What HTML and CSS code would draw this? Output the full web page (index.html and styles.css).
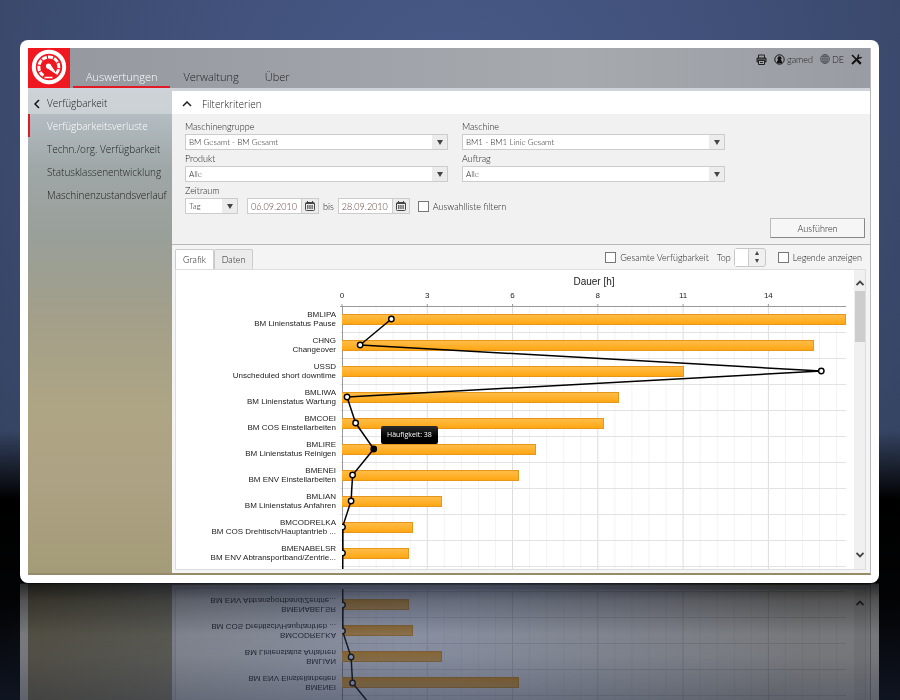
FILE: index.html
```html
<!DOCTYPE html>
<html lang="de">

<head>
  <meta charset="UTF-8">
  <title>Verfügbarkeitsverluste</title>
  <link rel="stylesheet" href="styles.css">
</head>

<body>
  <div class="window">
    <div class="app">
      <!-- Kopfzeile -->
      <header class="topbar">
        <a href="#" class="logo" aria-label="Startseite">
          <svg width="42" height="40" viewBox="0 0 42 40">
            <circle cx="21" cy="19" r="15.200" fill="none" stroke="#fff" stroke-width="4" />
            <path d="M15.500 27.500A10 10 0 1 1 28 26" fill="none" stroke="#fff" stroke-width="3" stroke-dasharray="5 1.200" />
            <path d="M16.500 29.500h8" fill="none" stroke="#fff" stroke-width="1.500" />
            <circle cx="20.500" cy="18" r="2.600" fill="#fff" />
            <path d="M22.500 16.500L29.500 27L18.800 20Z" fill="#fff" />
          </svg>
        </a>
        <nav class="main-nav">
          <a href="#" class="active">Auswertungen</a>
          <a href="#">Verwaltung</a>
          <a href="#">Über</a>
        </nav>
        <div class="tools">
          <button type="button" aria-label="Drucken">
            <svg width="11" height="11" viewBox="0 0 11 11" fill="none" stroke="#222">
              <path d="M2.500 4V1h6v3" />
              <path d="M1 4h9v4H1z" fill="#555" />
              <path d="M2.500 6.500h6v4h-6z" fill="#a5a8ad" />
              <path d="M4 8.500h3" />
            </svg>
          </button>
          <a href="#" class="user">
            <svg width="11" height="11" viewBox="0 0 11 11">
              <circle cx="5.500" cy="5.500" r="4.700" fill="none" stroke="#111" />
              <circle cx="5.500" cy="4.200" r="2" fill="#111" />
              <path d="M3 9.200V7.500Q3.500 5.500 5.500 5.500T8 7.500V9.200Z" fill="#111" />
            </svg>
            <span>gamed</span>
          </a>
          <a href="#" class="lang">
            <svg width="10" height="10" viewBox="0 0 10 10" fill="none" stroke="#4c4f55" stroke-width="0.800">
              <circle cx="5" cy="5" r="4.500" />
              <ellipse cx="5" cy="5" rx="2.200" ry="4.500" />
              <path d="M5 .500v9M.500 5h9M1.200 2.700h7.600M1.200 7.300h7.600" />
            </svg>
            <span>DE</span>
          </a>
          <button type="button" aria-label="Einstellungen">
            <svg width="11" height="11" viewBox="0 0 11 11" fill="none" stroke="#111">
              <path d="M1 1l4 4" stroke-width="1.600" />
              <path d="M6 6l3.800 3.800" stroke-width="2.400" />
              <path d="M1 10l6.500-6.500" stroke-width="2" />
              <path d="M8 .500Q6.500 2 7.500 3.500T10.500 3" stroke-width="1.400" />
            </svg>
          </button>
        </div>
      </header>

      <div class="body">
        <!-- Seitenmenü -->
        <aside class="sidebar">
          <a href="#" class="back">
            <svg width="6" height="10" viewBox="0 0 6 10" fill="none" stroke="#111" stroke-width="1.500">
              <path d="M5 1L1 5l4 4" />
            </svg>
            <span>Verfügbarkeit</span>
          </a>
          <a href="#" class="item active">Verfügbarkeitsverluste</a>
          <a href="#" class="item">Techn./org. Verfügbarkeit</a>
          <a href="#" class="item">Statusklassenentwicklung</a>
          <a href="#" class="item">Maschinenzustandsverlauf</a>
        </aside>

        <main class="content">
          <button type="button" class="filter-head">
            <svg width="10" height="6" viewBox="0 0 10 6" fill="none" stroke="#222" stroke-width="1.500">
              <path d="M1 5l4-4 4 4" />
            </svg>
            <span>Filterkriterien</span>
          </button>

          <form class="filter">
            <div class="fields">
              <div class="field">
                <label for="gruppe">Maschinengruppe</label>
                <div class="select"><select id="gruppe"><option>BM Gesamt - BM Gesamt</option></select></div>
              </div>
              <div class="field">
                <label for="maschine">Maschine</label>
                <div class="select"><select id="maschine"><option>BM1 - BM1 Linie Gesamt</option></select></div>
              </div>
              <div class="field">
                <label for="produkt">Produkt</label>
                <div class="select"><select id="produkt"><option>Alle</option></select></div>
              </div>
              <div class="field">
                <label for="auftrag">Auftrag</label>
                <div class="select"><select id="auftrag"><option>Alle</option></select></div>
              </div>
            </div>
            <div class="field">
              <label for="zeitraum">Zeitraum</label>
              <div class="period">
                <div class="select unit"><select id="zeitraum"><option>Tag</option></select></div>
                <div class="date">
                  <input type="text" value="06.09.2010" aria-label="von">
                  <button type="button" aria-label="Kalender öffnen">
                    <svg width="10" height="10" viewBox="0 0 10 10" fill="none" stroke="#444">
                      <rect x="0.500" y="1.500" width="9" height="8" rx="1" />
                      <path d="M.500 2.500h9M2.500 0v2M7.500 0v2" />
                      <path d="M2 5h6M2 7h6" stroke-dasharray="1.500 .700" stroke-width="1.300" />
                    </svg>
                  </button>
                </div>
                <label for="bis">bis</label>
                <div class="date">
                  <input type="text" id="bis" value="28.09.2010">
                  <button type="button" aria-label="Kalender öffnen">
                    <svg width="10" height="10" viewBox="0 0 10 10" fill="none" stroke="#444">
                      <rect x="0.500" y="1.500" width="9" height="8" rx="1" />
                      <path d="M.500 2.500h9M2.500 0v2M7.500 0v2" />
                      <path d="M2 5h6M2 7h6" stroke-dasharray="1.500 .700" stroke-width="1.300" />
                    </svg>
                  </button>
                </div>
                <label class="check"><input type="checkbox">Auswahlliste filtern</label>
              </div>
            </div>
            <button type="submit" class="run">Ausführen</button>
          </form>

          <section class="results">
            <div class="results-bar">
              <div class="tabs">
                <button type="button" class="tab active">Grafik</button>
                <button type="button" class="tab">Daten</button>
              </div>
              <div class="options">
                <label class="check"><input type="checkbox">Gesamte Verfügbarkeit</label>
                <label for="top">Top</label>
                <div class="spinner">
                  <input type="text" id="top">
                  <div class="steps">
                    <button type="button" aria-label="mehr"></button>
                    <button type="button" class="down" aria-label="weniger"></button>
                  </div>
                </div>
                <label class="check"><input type="checkbox">Legende anzeigen</label>
              </div>
            </div>

            <!-- Diagramm -->
            <div class="panel">
              <div class="chart">
                <div class="axis">
                  <div class="axis-title">Dauer [h]</div>
                  <div class="ticks" id="ticks"></div>
                </div>
                <div class="labels" id="labels"></div>
                <div class="plot" id="plot">
                  <svg class="grid" id="grid"></svg>
                  <div id="bars"></div>
                  <svg class="line" id="line"></svg>
                  <div class="tooltip">Häufigkeit: 38</div>
                </div>
              </div>
              <div class="scrollbar">
                <svg width="8" height="6" viewBox="0 0 8 6" fill="none" stroke="#444" stroke-width="1.800">
                  <path d="M.500 5L4 1.500 7.500 5" />
                </svg>
                <div class="thumb"></div>
                <svg width="8" height="6" viewBox="0 0 8 6" fill="none" stroke="#444" stroke-width="1.800">
                  <path d="M.500 1L4 4.500 7.500 1" />
                </svg>
              </div>
            </div>
          </section>
        </main>
      </div>
    </div>
  </div>

  <script src="chart.js"></script>
</body>

</html>
```

FILE: styles.css
```css
* {
  box-sizing: border-box;
}

html {
  height: 100%;
}

body {
  margin: 0;
  min-height: 100%;
  padding: 40px 21px 0 20px;
  overflow: hidden;
  font-family: Lato, "Open Sans", sans-serif;
  font-weight: 300;
  font-size: 9px;
  color: #222;
  background:
    radial-gradient(ellipse 400px 150px at 45% 640px, rgba(62, 82, 132, 0.6), transparent),
    linear-gradient(to bottom, transparent 430px, #000 500px, rgba(0, 0, 0, 0.95) 600px, rgba(6, 9, 17, 0.8) 700px),
    radial-gradient(ellipse 620px 600px at 50% 100px, #485a88, #405079 45%, #34425f 100%);
}

a {
  color: inherit;
  text-decoration: none;
}

button,
input,
select {
  font: inherit;
  color: inherit;
  margin: 0;
  padding: 0;
  border: none;
  background: none;
}

svg {
  display: block;
}

/* Fenster mit Spiegelung */
.window {
  background: #fff;
  padding: 8px;
  border-radius: 8px;
  -webkit-box-reflect: below -8px linear-gradient(to top, transparent 8px, rgba(0, 0, 0, 0.16) 9px, rgba(0, 0, 0, 0.32) 26px, rgba(0, 0, 0, 0.45) 60px, rgba(0, 0, 0, 0.44) 80px, rgba(0, 0, 0, 0.32) 130px);
}

.app {
  border-right: 1px solid #b9b9bd;
  border-bottom: 2px solid #958b68;
  background: linear-gradient(to bottom, #b6bfc5 0, #b6bfc5 60px, #9fa7a7 120px, #999f99 190px, #a39f89 270px, #aea584 360px, #ada384 430px, #a49b78 100%);
}

/* Kopfzeile */
.topbar {
  display: flex;
  height: 43px;
  border-bottom: 3px solid #cfd3dc;
  background: linear-gradient(to right, #94989e, #9da1a7 30%, #a6a9ae 65%, #999ca2);
}

.logo {
  width: 42px;
  background: #f01820;
}

.main-nav {
  display: flex;
  flex: 1;
  margin-left: 3px;
  font-family: "Open Sans", "Noto Sans", sans-serif;
  font-size: 11px;
}

.main-nav a {
  padding: 20px 13px 0;
  line-height: 18px;
  border-bottom: 2px solid transparent;
}

.main-nav .active {
  color: #fff;
  border-color: #e01b26;
}

.tools {
  display: flex;
  align-items: center;
  gap: 7px;
  height: 22px;
  padding-right: 8px;
}

.tools a {
  display: flex;
  align-items: center;
  gap: 2px;
}

/* Seitenmenü */
.body {
  display: flex;
}

.sidebar {
  width: 144px;
  font-family: "Open Sans", "Noto Sans", sans-serif;
  font-size: 10px;
  line-height: 21px;
}

.sidebar a {
  display: flex;
  align-items: center;
  padding-top: 2px;
}

.sidebar .back {
  gap: 7px;
  padding-left: 6px;
  background: rgba(255, 255, 255, 0.3);
}

.sidebar .item {
  padding-left: 17px;
  border-left: 2px solid transparent;
}

.sidebar .active {
  color: #fff;
  border-color: #e01b26;
}

/* Filter */
.content {
  flex: 1;
  min-width: 0;
  background: #f1f1f1;
}

.filter-head {
  display: flex;
  align-items: center;
  gap: 10px;
  width: 100%;
  height: 23px;
  padding: 2px 10px 0;
  font-family: "Open Sans", "Noto Sans", sans-serif;
  font-size: 10px;
  background: #fff;
}

.filter {
  display: flex;
  flex-direction: column;
  gap: 2px;
  height: 131px;
  padding: 6px 5px 6px 13px;
  border-bottom: 1px solid #b8b8b8;
}

.fields {
  display: grid;
  grid-template-columns: repeat(2, minmax(0, 263px));
  gap: 2px 14px;
}

.field > label {
  display: block;
  line-height: 14px;
}

.select {
  position: relative;
  height: 16px;
  border: 1px solid #ccc;
  background: linear-gradient(to left, #ececec 15px, #fff 15px);
}

.select::after {
  content: "";
  position: absolute;
  top: 5px;
  right: 4px;
  border: 3px solid transparent;
  border-top: 5px solid #444;
  border-bottom: none;
  pointer-events: none;
}

.select select {
  display: block;
  appearance: none;
  width: 100%;
  height: 14px;
  padding-left: 3px;
  font-size: 8px;
}

.period {
  display: flex;
  align-items: center;
}

.unit {
  width: 53px;
  margin-right: 9px;
}

.date {
  display: flex;
  width: 72px;
  height: 16px;
  border: 1px solid #ccc;
  background: #fff;
}

.date input {
  flex: 1;
  min-width: 0;
  padding-left: 3px;
  color: #5c3a34;
}

.date button {
  width: 17px;
  padding-left: 3px;
  border-left: 1px solid #ccc;
  background: #ececec;
}

.period > label {
  padding: 0 4px;
}

.check {
  display: flex;
  align-items: center;
  gap: 4px;
}

.check input {
  appearance: none;
  width: 11px;
  height: 11px;
  border: 1px solid #777;
  background: #fff;
}

.period > .check {
  margin-left: 4px;
}

.run {
  width: 95px;
  height: 20px;
  margin: auto 0 0 auto;
  border: 1px solid #bbb;
  border-right-color: #888;
  border-bottom-color: #888;
  background: #f6f6f6;
}

/* Ergebnis */
.results {
  padding: 0 4px 3px 3px;
  background: #f5f4f5;
}

.results-bar {
  display: flex;
  justify-content: space-between;
  align-items: flex-end;
  height: 24px;
}

.tabs {
  display: flex;
}

.tab {
  width: 39px;
  height: 20px;
  border: 1px solid #ccc;
  border-bottom: none;
  border-radius: 2px 2px 0 0;
  background: #ececec;
}

.tab.active {
  background: #fff;
}

.options {
  display: flex;
  align-items: center;
  height: 24px;
  gap: 8px;
  padding-right: 4px;
}

.spinner {
  display: flex;
  width: 32px;
  height: 19px;
  border: 1px solid #c8c8c8;
  border-radius: 3px;
  background: #f0f0f0;
}

.options .spinner {
  margin: 0 4px 0 -5px;
}

.spinner input {
  width: 14px;
  background: #fff;
  border-right: 1px solid #ccc;
}

.steps {
  display: flex;
  flex: 1;
  flex-direction: column;
  align-items: center;
  justify-content: center;
  gap: 4px;
}

.steps button {
  border: 2px solid transparent;
  border-top: none;
  border-bottom: 4px solid #444;
}

.steps .down {
  border-bottom: none;
  border-top: 4px solid #444;
}

.panel {
  display: flex;
  border: 1px solid #ddd;
  background: #fff;
}

/* Diagramm */
.chart {
  display: grid;
  grid-template-columns: 160px 1fr;
  grid-template-rows: 36px 263px;
  column-gap: 6px;
  flex: 1;
  padding-right: 8px;
  overflow: hidden;
  font-family: "Liberation Sans", Arial, sans-serif;
  font-weight: 400;
  font-size: 8px;
}

.axis {
  grid-column: 2;
  text-align: center;
}

.axis-title {
  padding-top: 5px;
  font-size: 10px;
  line-height: 14px;
}

/* halbe Teilung nach links, damit die Zahlen über den Strichen stehen */
.ticks {
  display: flex;
  margin-left: -8.46%;
  margin-right: 8.46%;
  line-height: 14px;
}

.ticks span {
  width: 16.92%;
  flex: none;
}

.labels {
  grid-column: 1;
  text-align: right;
}

.label {
  height: 26px;
  padding-top: 4px;
  line-height: 9px;
  white-space: nowrap;
}

.plot {
  position: relative;
}

.row {
  height: 26px;
  padding-top: 8px;
}

.bar {
  height: 11px;
  border: 1px solid #e8961a;
  border-left: none;
  background: linear-gradient(to bottom, #ffbc47, #ffa714);
}

.grid,
.line {
  position: absolute;
  top: 0;
  left: 0;
  width: 100%;
  height: 100%;
}

.grid {
  overflow: visible;
}

.line {
  overflow: hidden;
}

#bars {
  position: relative;
}

.tooltip {
  position: absolute;
  top: 120px;
  left: 39px;
  padding: 0 6px;
  line-height: 18px;
  font-family: "Open Sans", "Noto Sans", sans-serif;
  font-size: 7px;
  color: #fff;
  border-radius: 2px;
  background: linear-gradient(to bottom, #2c2c2c, #000 60%);
}

.scrollbar {
  display: flex;
  flex-direction: column;
  align-items: center;
  width: 11px;
  padding: 10px 0 11px;
  background: #f0f0f0;
}

.thumb {
  width: 10px;
  height: 51px;
  margin: 5px 0 auto;
  background: #cdcdcd;
}
```

FILE: chart.js
```js
// Dauer in % der Achse, Häufigkeit in % der Achse
const rows = [
  { code: 'BMLIPA', name: 'BM Linienstatus Pause', bar: 100, dot: 9.8 },
  { code: 'CHNG', name: 'Changeover', bar: 93.7, dot: 3.6 },
  { code: 'USSD', name: 'Unscheduled short downtime', bar: 67.9, dot: 95.1 },
  { code: 'BMLIWA', name: 'BM Linienstatus Wartung', bar: 55, dot: 1 },
  { code: 'BMCOEI', name: 'BM COS Einstellarbeiten', bar: 51.9, dot: 2.7 },
  { code: 'BMLIRE', name: 'BM Linienstatus Reinigen', bar: 38.4, dot: 6.3 },
  { code: 'BMENEI', name: 'BM ENV Einstellarbeiten', bar: 35.1, dot: 2.1 },
  { code: 'BMLIAN', name: 'BM Linienstatus Anfahren', bar: 19.8, dot: 1.8 },
  { code: 'BMCODRELKA', name: 'BM COS Drehtisch/Hauptantrieb ...', bar: 14, dot: 0.1 },
  { code: 'BMENABELSR', name: 'BM ENV Abtransportband/Zentrie...', bar: 13.2, dot: 0.1 }
];
const ticks = [0, 3, 6, 8, 11, 14];
const rowHeight = 26;
const tickWidth = 16.92;
const selected = 5;

document.getElementById('ticks').innerHTML = ticks.map(t => `<span>${t}</span>`).join('');

document.getElementById('labels').innerHTML = rows.map(r =>
  `<div class="label">${r.code}<br>${r.name}</div>`).join('');

document.getElementById('bars').innerHTML = rows.map(r =>
  `<div class="row"><div class="bar" style="width: ${r.bar}%"></div></div>`).join('');

// Gitterlinien
let grid = '';
for (let i = 1; i < 30; i++) {
  const x = i * tickWidth / 5;
  grid += `<line x1="${x}%" y1="0" x2="${x}%" y2="100%" stroke="${i % 5 ? '#f3f3f3' : '#dcdcdc'}" />`;
}
for (let i = 1; i <= rows.length; i++) {
  const y = i * rowHeight + 0.5;
  grid += `<line x1="-2" y1="${y}" x2="100%" y2="${y}" stroke="#e2e2e2" />`;
}
ticks.forEach((t, i) => {
  grid += `<line x1="${i * tickWidth}%" y1="-2" x2="${i * tickWidth}%" y2="1" stroke="#999" />`;
});
grid += '<line x1="-2" y1="0.5" x2="100%" y2="0.5" stroke="#999" />';
grid += '<line x1="0.5" y1="0" x2="0.5" y2="100%" stroke="#999" />';
document.getElementById('grid').innerHTML = grid;

// Häufigkeit als Linie mit Punkten
const y = i => i * rowHeight + 13;
let line = '';
for (let i = 1; i < rows.length; i++) {
  line += `<line x1="${rows[i - 1].dot}%" y1="${y(i - 1)}" x2="${rows[i].dot}%" y2="${y(i)}" stroke="#000" stroke-width="1.5" />`;
}
line += `<line x1="0.1%" y1="${y(8)}" x2="0.1%" y2="100%" stroke="#000" stroke-width="2" />`;
rows.forEach((r, i) => {
  line += `<circle cx="${r.dot}%" cy="${y(i)}" r="2.7" fill="${i === selected ? '#000' : '#fff'}" stroke="#000" stroke-width="1.4" />`;
});
document.getElementById('line').innerHTML = line;
```
